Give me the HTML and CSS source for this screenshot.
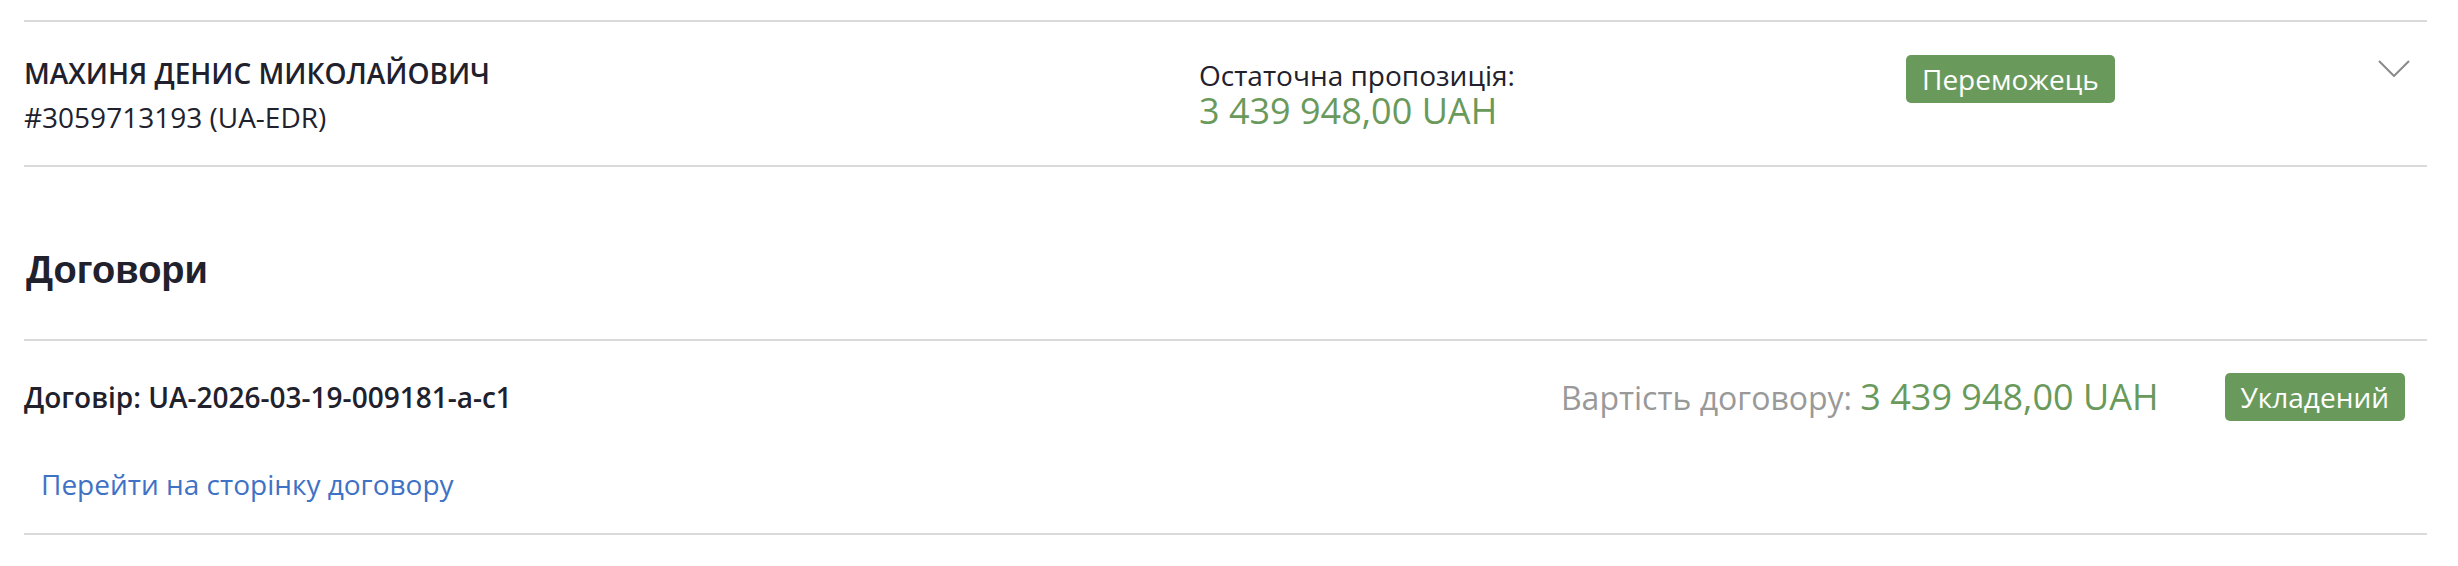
FILE: index.html
```html
<!DOCTYPE html>
<html lang="uk">
<head>
<meta charset="utf-8">
<title>Договори</title>
<link rel="stylesheet" href="styles.css">
</head>
<body>
<div class="page">
  <section class="bid">
    <div class="bid-party">
      <div class="party-name">МАХИНЯ ДЕНИС МИКОЛАЙОВИЧ</div>
      <div class="party-id">#3059713193 (UA-EDR)</div>
    </div>
    <div class="bid-offer">
      <div class="offer-label">Остаточна пропозиція:</div>
      <div class="offer-value">3 439 948,00 UAH</div>
    </div>
    <div class="bid-status"><span class="badge">Переможець</span></div>
    <div class="bid-toggle">
      <svg class="chevron" width="32" height="17" viewBox="0 0 32 17" aria-hidden="true"><polyline points="1,1 16,16 31,1" fill="none" stroke="#8a8a8a" stroke-width="2"/></svg>
    </div>
  </section>

  <h2 class="section-title">Договори</h2>

  <section class="contract">
    <div class="contract-head">
      <div class="contract-title">Договір: UA-2026-03-19-009181-a-c1</div>
      <div class="contract-meta">
        <span class="contract-value"><span class="muted">Вартість договору:</span> <span class="amount">3 439 948,00 UAH</span></span>
        <span class="badge">Укладений</span>
      </div>
    </div>
    <a class="contract-link" href="#">Перейти на сторінку договору</a>
  </section>
</div>
</body>
</html>
```

FILE: styles.css
```css
html, body {
  margin: 0;
  padding: 0;
  background: #ffffff;
}

body {
  font-family: "Open Sans", "Noto Sans", sans-serif;
  color: #21212d;
  font-size: 28px;
}

.page {
  margin: 0 31px 0 24px;
  padding-top: 20px;
}

.bid {
  display: grid;
  grid-template-columns: 1175px 707px 1fr auto;
  align-items: start;
  border-top: 2px solid #dadada;
  border-bottom: 2px solid #dadada;
  padding: 29px 17px 26px 0;
}

.party-name {
  font-weight: 600;
  line-height: 44px;
}

.party-id {
  line-height: 44px;
}

.bid-offer {
  margin-top: 7px;
}

.offer-label {
  line-height: 34px;
}

.offer-value {
  font-size: 36px;
  line-height: 38px;
  color: #6a9a5b;
}

.bid-status {
  display: flex;
  margin-top: 4px;
}

.badge {
  display: inline-block;
  background: #6a9a5b;
  color: #ffffff;
  font-size: 28px;
  line-height: 40px;
  padding: 4px 16px;
  border-radius: 5px;
}

.bid-toggle {
  display: flex;
  margin-top: 9px;
}

.chevron {
  display: block;
}

.section-title {
  font-family: "Liberation Sans", Arial, sans-serif;
  font-weight: 700;
  font-size: 38px;
  line-height: 44px;
  margin: 81px 0 47px 2px;
  color: #21212d;
}

.contract {
  border-top: 2px solid #dadada;
  border-bottom: 2px solid #dadada;
  padding: 32px 0 29px;
}

.contract-head {
  display: flex;
  justify-content: space-between;
  align-items: center;
  padding-right: 22px;
}

.contract-title {
  font-weight: 600;
  line-height: 40px;
}

.contract-meta {
  display: flex;
  align-items: center;
  gap: 66px;
}

.contract-value {
  font-size: 32px;
  line-height: 44px;
}

.muted {
  color: #999999;
}

.amount {
  font-size: 36px;
  color: #6a9a5b;
}

.contract-link {
  display: block;
  margin-top: 43px;
  padding-left: 17px;
  line-height: 40px;
  color: #3f72c5;
  text-decoration: none;
}
```
